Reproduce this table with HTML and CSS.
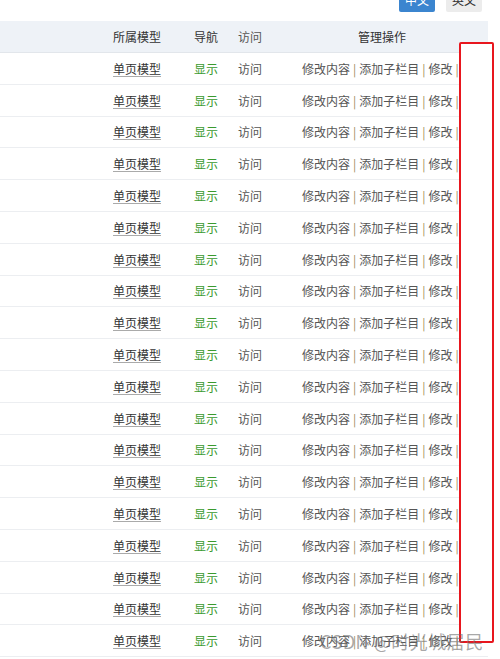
FILE: index.html
```html
<!DOCTYPE html>
<html lang="zh-CN">
<head>
    <meta charset="UTF-8">
    <meta name="viewport" content="width=device-width, initial-scale=1.0">
    <title>栏目管理</title>
    <link rel="stylesheet" href="styles.css">
</head>
<body>
    <div class="toolbar">
        <button class="lang active">中文</button>
        <button class="lang">英文</button>
    </div>

    <div class="table">
        <div class="row head">
            <span></span>
            <span>所属模型</span>
            <span>导航</span>
            <span>访问</span>
            <span class="ops-title">管理操作</span>
        </div>
        <div id="rows"></div>
    </div>

    <div class="mark"></div>
    <div class="watermark">CSDN @时光城居民</div>

    <script>
        const rows = document.getElementById('rows');
        for (let i = 0; i < 19; i++) {
            rows.innerHTML += `
                <div class="row">
                    <span></span>
                    <span><a href="#">单页模型</a></span>
                    <span class="show">显示</span>
                    <span>访问</span>
                    <span class="ops">修改内容<i>|</i>添加子栏目<i>|</i>修改<i>|</i></span>
                </div>`;
        }
    </script>
</body>
</html>
```

FILE: styles.css
```css
body {
    margin: 0;
    font-family: "Noto Sans CJK SC", "Noto Sans", sans-serif;
    font-size: 12px;
    color: #333;
    background: #fff;
    overflow: hidden;
}
.toolbar {
    height: 12px;
    margin-bottom: 9px;
    padding-right: 18px;
    display: flex;
    justify-content: flex-end;
    align-items: flex-end;
    gap: 11px;
}
.lang {
    height: 26px;
    width: 36px;
    padding: 0;
    border: none;
    border-radius: 2px;
    font-family: inherit;
    font-size: 12px;
    color: #333;
    background: #ececec;
}
.lang.active {
    background: #3b85cf;
    color: #fff;
}
.table {
    width: 488px;
}
.row {
    display: grid;
    grid-template-columns: 113px 81px 44px 64px 1fr;
    align-items: center;
    height: 31.8px;
    box-sizing: border-box;
    border-bottom: 1px solid #eceef1;
    white-space: nowrap;
    overflow: hidden;
}
.row.head {
    height: 32px;
    background: #eef2f7;
    border-bottom: 1px solid #e2e6eb;
}
.ops-title {
    padding-left: 56px;
}
.row a {
    color: #333;
    text-decoration: underline;
    text-decoration-color: #aaa;
    text-underline-offset: 2px;
}
.show {
    color: #3a9a2e;
}
.row span:nth-child(4) {
    color: #555;
}
.ops {
    color: #555;
}
.ops i {
    font-style: normal;
    color: #a08c5c;
    margin: 0 3px;
}
.mark {
    position: absolute;
    left: 459px;
    top: 42px;
    width: 31px;
    height: 597px;
    border: 2.5px solid #e8161e;
    border-radius: 2px;
    background: #fff;
}
.watermark {
    position: absolute;
    left: 320px;
    top: 628px;
    font-size: 18px;
    color: rgba(110, 110, 110, 0.6);
    letter-spacing: 0.5px;
}
```
